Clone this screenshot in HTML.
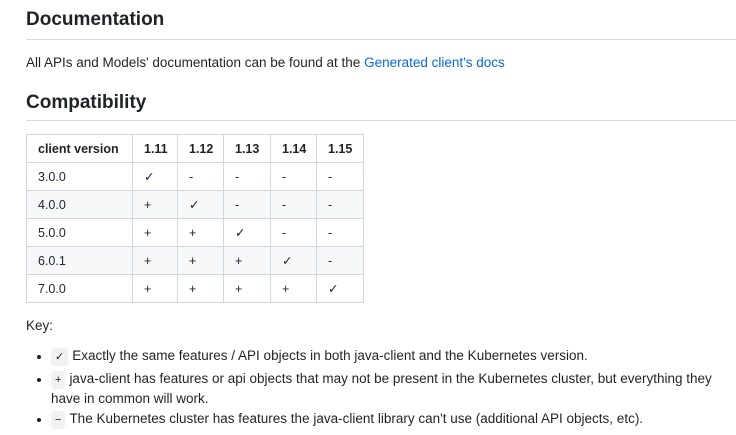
<!DOCTYPE html>
<html><head><meta charset="utf-8"><style>
body{margin:0;background:#fff;font-family:"Liberation Sans",sans-serif;color:#1f2328;font-size:13.5px;width:736px;height:435px;overflow:hidden;position:relative}
.a{position:absolute;white-space:nowrap}
h2{margin:0;font-size:19px;font-weight:bold}
.hr{position:absolute;left:26px;width:710px;height:1px;background:#d8dee4}
table{position:absolute;left:26px;top:134px;border-collapse:collapse;font-size:12.5px;table-layout:fixed;width:337px}
td,th{border:1px solid #d0d7de;height:27px;padding:0 0 0 11px;text-align:left;color:#1f2328}
th{font-weight:bold}
tr:nth-child(odd) td{background:#f6f8fa}
.c{display:inline-block;background:#eff1f3;border-radius:4px;padding:0 4px;font-size:11px;line-height:18px;margin-right:4px}
.dot{position:absolute;left:37px;width:4px;height:4px;border-radius:50%;background:#1f2328}
a{color:#0969da;text-decoration:none}
</style></head><body>
<h2 class="a" style="left:26px;top:9px">Documentation</h2>
<div class="hr" style="top:39px"></div>
<div class="a" style="left:26px;top:55px">All APIs and Models' documentation can be found at the <a>Generated client's docs</a></div>
<h2 class="a" style="left:26px;top:92px">Compatibility</h2>
<div class="hr" style="top:120px"></div>
<table>
<colgroup><col style="width:106px"><col style="width:45px"><col style="width:46px"><col style="width:47px"><col style="width:46px"><col style="width:47px"></colgroup>
<tr><th>client version</th><th>1.11</th><th>1.12</th><th>1.13</th><th>1.14</th><th>1.15</th></tr>
<tr><td>3.0.0</td><td>✓</td><td>-</td><td>-</td><td>-</td><td>-</td></tr>
<tr><td>4.0.0</td><td>+</td><td>✓</td><td>-</td><td>-</td><td>-</td></tr>
<tr><td>5.0.0</td><td>+</td><td>+</td><td>✓</td><td>-</td><td>-</td></tr>
<tr><td>6.0.1</td><td>+</td><td>+</td><td>+</td><td>✓</td><td>-</td></tr>
<tr><td>7.0.0</td><td>+</td><td>+</td><td>+</td><td>+</td><td>✓</td></tr>
</table>
<div class="a" style="left:26px;top:318px">Key:</div>
<div class="dot" style="top:355px"></div>
<div class="a" style="left:51px;top:348px"><span class="c">✓</span>Exactly the same features / API objects in both java-client and the Kubernetes version.</div>
<div class="dot" style="top:378px"></div>
<div class="a" style="left:51px;top:371px"><span class="c">+</span>java-client has features or api objects that may not be present in the Kubernetes cluster, but everything they</div>
<div class="a" style="left:51px;top:391px">have in common will work.</div>
<div class="dot" style="top:418px"></div>
<div class="a" style="left:51px;top:411px"><span class="c">−</span>The Kubernetes cluster has features the java-client library can't use (additional API objects, etc).</div>
</body></html>
